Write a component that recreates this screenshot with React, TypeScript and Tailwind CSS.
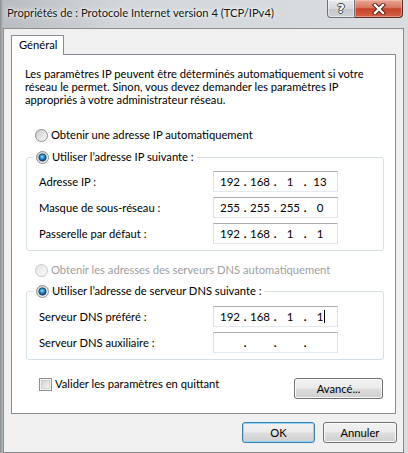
import React from "react";

function Radio({ id, checked, disabled }: { id: string; checked?: boolean; disabled?: boolean }) {
  return (
    <svg width="13" height="13" viewBox="0 0 13 13" className="shrink-0 block">
      <defs>
        <linearGradient id={`${id}-bg`} x1="0" y1="0" x2="1" y2="1">
          <stop offset="0" stopColor={disabled ? "#e4e4e4" : "#c9c9c9"} />
          <stop offset="1" stopColor={disabled ? "#fbfbfb" : "#fbfbfb"} />
        </linearGradient>
        <radialGradient id={`${id}-dot`} cx="0.45" cy="0.4" r="0.6">
          <stop offset="0" stopColor="#9fe8ff" />
          <stop offset="0.45" stopColor="#2d8cd0" />
          <stop offset="1" stopColor="#123a66" />
        </radialGradient>
      </defs>
      <circle cx="6.5" cy="6.5" r="6" fill={`url(#${id}-bg)`} stroke={disabled ? "#c6c6c6" : "#8e8f8f"} strokeWidth="1" />
      {checked && <circle cx="6.5" cy="6.5" r="3.7" fill={`url(#${id}-dot)`} stroke="#1b3d66" strokeWidth="0.7" />}
    </svg>
  );
}

function Checkbox() {
  return (
    <svg width="13" height="13" viewBox="0 0 13 13" className="shrink-0 block">
      <defs>
        <linearGradient id="cb-bg" x1="0" y1="0" x2="1" y2="1">
          <stop offset="0" stopColor="#cbcfd5" />
          <stop offset="1" stopColor="#f7f7f7" />
        </linearGradient>
      </defs>
      <rect x="0.5" y="0.5" width="12" height="12" fill="#f4f4f4" stroke="#8e8f8f" />
      <rect x="2.5" y="2.5" width="8" height="8" fill="url(#cb-bg)" stroke="#bdbdbd" strokeWidth="0.6" />
    </svg>
  );
}

function IpBox({ parts, caret }: { parts: string[]; caret?: boolean }) {
  return (
    <div className="w-[125px] h-[21px] border border-[#abadb3] border-l-[#dbdfe6] border-r-[#dbdfe6] border-b-[#e3e9ef] bg-white flex items-center pl-[4px] text-black text-[11.5px]">
      {parts.map((p, i) => (
        <React.Fragment key={i}>
          {i > 0 && <span className="w-[6px] text-center font-bold">.</span>}
          <span className="w-[24px] text-center">
            <span className="relative inline-block">
              {p}
              {caret && i === 3 && <span className="absolute top-[0px] right-[-2px] w-[1px] h-[13px] bg-black" />}
            </span>
          </span>
        </React.Fragment>
      ))}
    </div>
  );
}

function Row({ label, parts, caret }: { label: string; parts: string[]; caret?: boolean }) {
  return (
    <div className="flex items-center h-[21px]">
      <div className="w-[174px] whitespace-nowrap">{label}</div>
      <IpBox parts={parts} caret={caret} />
    </div>
  );
}

function WinButton({ children, def, w }: { children: React.ReactNode; def?: boolean; w: string }) {
  return (
    <div
      className={`${w} h-[21px] rounded-[3px] border flex items-center justify-center text-black bg-[linear-gradient(to_bottom,#f2f2f2_0%,#ebebeb_48%,#dddddd_52%,#cfcfcf_100%)] ${
        def ? "border-[#3c7fb1] shadow-[inset_0_0_0_1px_#8fd6f6]" : "border-[#707070] shadow-[inset_0_0_0_1px_#fbfbfb]"
      }`}
    >
      {children}
    </div>
  );
}

export default function App() {
  return (
    <div className="font-['Lato',sans-serif] w-[408px] h-[453px] overflow-hidden text-[11.2px] leading-[14px] text-black bg-[linear-gradient(to_right,#8a8d90_0px,#b9bdc1_3px,#d3d7db_30%,#d9dde0_100%)] flex flex-col">
      <div className="h-[28px] shrink-0 flex items-start">
        <div className="pl-[7px] pt-[6px] whitespace-nowrap text-[11.2px] text-[#151515] [text-shadow:0_0_6px_#ffffff,0_0_3px_#ffffff]">
          Propriétés de : Protocole Internet version 4 (TCP/IPv4)
        </div>
        <div className="ml-auto mr-[5px] flex h-[18px]">
          <div className="w-[28px] h-[18px] rounded-bl-[4px] border border-t-0 border-[#6f7378] bg-[linear-gradient(to_bottom,#e9eaec_0%,#d6d8db_50%,#c2c5c9_51%,#cfd2d5_100%)] shadow-[inset_0_0_0_1px_rgba(255,255,255,0.5)] flex items-center justify-center">
            <span className="font-['DejaVu_Sans',sans-serif] font-bold text-[13px] leading-[13px] text-white [text-shadow:1px_0_0_#3d4147,-1px_0_0_#3d4147,0_1px_0_#3d4147,0_-1px_0_#3d4147]">
              ?
            </span>
          </div>
          <div className="w-[48px] h-[18px] rounded-br-[4px] border border-t-0 border-l-0 border-[#5d2a22] bg-[linear-gradient(to_bottom,#e8a795_0%,#d9755f_45%,#c4432a_52%,#d5634a_100%)] shadow-[inset_0_0_0_1px_rgba(255,210,200,0.45)] flex items-center justify-center">
            <svg width="14" height="12" viewBox="0 0 14 12">
              <path d="M3 2 L11 10 M11 2 L3 10" stroke="#4a1a12" strokeWidth="4.2" strokeLinecap="square" />
              <path d="M3 2 L11 10 M11 2 L3 10" stroke="#ffffff" strokeWidth="2.4" strokeLinecap="square" />
            </svg>
          </div>
        </div>
      </div>

      <div className="ml-[3px] mr-[4px] h-[425px] border border-[#8a8c8e] bg-[#f0f0f0] flex flex-col">
        <div className="mt-[6px] ml-[7px] w-[53px] h-[20px] -mb-[1px] relative z-10 border border-b-0 border-[#898c95] bg-white pl-[7px] pt-[2px] whitespace-nowrap">
          Général
        </div>
        <div className="ml-[7px] w-[385px] h-[360px] border border-[#898c95] bg-white flex flex-col">
          <p className="ml-[13px] mt-[12px] leading-[13px] whitespace-nowrap">
            Les paramètres IP peuvent être déterminés automatiquement si votre
            <br />
            réseau le permet. Sinon, vous devez demander les paramètres IP
            <br />
            appropriés à votre administrateur réseau.
          </p>

          <div className="mt-[22px] ml-[23px] h-[14px] flex items-center gap-[3px]">
            <Radio id="r1" />
            <span>Obtenir une adresse IP automatiquement</span>
          </div>

          <fieldset className="mt-[8px] ml-[14px] mr-[11px] border border-[#d5dfe5] rounded-[3px] pb-[6px]">
            <legend className="ml-[6px] px-[3px] h-[14px] flex items-center gap-[3px]">
              <Radio id="r2" checked />
              <span>Utiliser l’adresse IP suivante :</span>
            </legend>
            <div className="mt-[7px] pl-[12px] flex flex-col gap-[5px]">
              <Row label="Adresse IP :" parts={["192", "168", "1", "13"]} />
              <Row label="Masque de sous-réseau :" parts={["255", "255", "255", "0"]} />
              <Row label="Passerelle par défaut :" parts={["192", "168", "1", "1"]} />
            </div>
          </fieldset>

          <div className="mt-[12px] ml-[23px] h-[14px] flex items-center gap-[3px] text-[#a0a0a0]">
            <Radio id="r3" disabled />
            <span>Obtenir les adresses des serveurs DNS automatiquement</span>
          </div>

          <fieldset className="mt-[7px] ml-[14px] mr-[11px] border border-[#d5dfe5] rounded-[3px] pb-[6px]">
            <legend className="ml-[6px] px-[3px] h-[14px] flex items-center gap-[3px]">
              <Radio id="r4" checked />
              <span>Utiliser l’adresse de serveur DNS suivante :</span>
            </legend>
            <div className="mt-[8px] pl-[12px] flex flex-col gap-[5px]">
              <Row label="Serveur DNS préféré :" parts={["192", "168", "1", "1"]} caret />
              <Row label="Serveur DNS auxiliaire :" parts={["", "", "", ""]} />
            </div>
          </fieldset>

          <div className="mt-[17px] pl-[27px] pr-[12px] flex items-start justify-between">
            <div className="h-[14px] flex items-center gap-[3px]">
              <Checkbox />
              <span>Valider les paramètres en quittant</span>
            </div>
            <div className="mt-[1px]">
              <WinButton w="w-[89px]">Avancé...</WinButton>
            </div>
          </div>
        </div>

        <div className="mt-[8px] pr-[6px] flex justify-end gap-[8px]">
          <WinButton w="w-[73px]" def>
            OK
          </WinButton>
          <WinButton w="w-[74px]">Annuler</WinButton>
        </div>
      </div>
    </div>
  );
}
